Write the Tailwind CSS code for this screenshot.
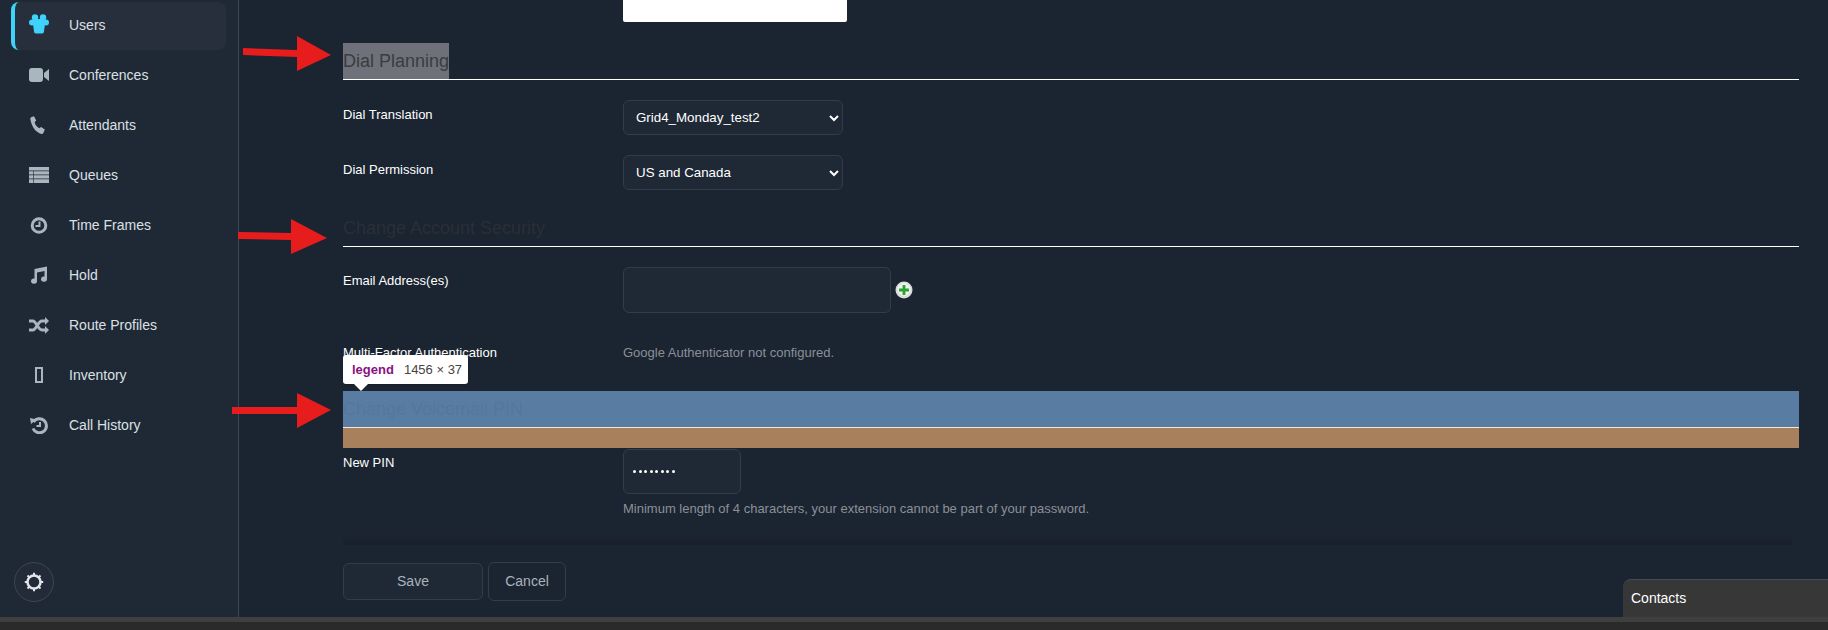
<!DOCTYPE html>
<html lang="en">
<head>
    <meta charset="UTF-8">
    <title>Users</title>
    <script src="https://cdn.jsdelivr.net/npm/@tailwindcss/browser@4"></script>
</head>
<body class="relative h-[630px] w-[1828px] overflow-hidden bg-[#2a2a2a] font-['Liberation_Sans',sans-serif]">

    <!-- app frame -->
    <div class="flex h-[617px] overflow-hidden rounded-bl-[4px] bg-[#1b2431]">

        <!-- sidebar -->
        <aside class="relative h-full w-[239px] shrink-0 border-r border-[#3c4654] bg-[#1f2935] pt-[2px] pl-[11px] pr-[12px]">
            <nav class="flex flex-col text-[14px] text-[#dbe0e5]">
                <a class="flex h-[48px] items-center rounded-lg border-l-[4px] border-[#3fd2fb] bg-[#272e3c] pb-[2px] pl-[14px]">
                    <svg class="mr-[20px] h-[22px] w-[20px] shrink-0 text-[#3fd2fb]" viewBox="0 0 20 22" fill="currentColor"><circle cx="6" cy="3.500" r="3.200"/><circle cx="14" cy="3.500" r="3.200"/><circle cx="3" cy="8.500" r="3"/><circle cx="17" cy="8.500" r="3"/><path d="M5 5h10l1 5-1 7.500a2 2 0 0 1-2 2H7a2 2 0 0 1-2-2L4 10z"/></svg>
                    Users
                </a>
                <a class="mt-[1px] flex h-[48px] items-center pl-[18px]">
                    <svg class="mr-[20px] h-[16px] w-[20px] shrink-0 text-[#a9b6bf]" viewBox="0 0 20 16" fill="currentColor"><rect x="0" y="1" width="14" height="14" rx="3"/><path d="M15 6l5-4v12l-5-4z"/></svg>
                    Conferences
                </a>
                <a class="mt-[2px] flex h-[48px] items-center pl-[18px]">
                    <svg class="mr-[20px] h-[18px] w-[20px] shrink-0 text-[#a9b6bf]" viewBox="0 0 20 18" fill="currentColor"><path d="M2 1.200l3-.9 2.200 4.200-1.600 1.700c.6 2.600 2.200 4.600 4.600 6l1.900-1.300 3.700 2.700-1.400 3.300c-.4.800-1.200 1.200-2 1C6.800 16.200 2.800 11.200 1.400 3.400 1.300 2.500 1.400 1.700 2 1.200z"/></svg>
                    Attendants
                </a>
                <a class="mt-[2px] flex h-[48px] items-center pl-[18px]">
                    <svg class="mr-[20px] h-[16px] w-[20px] shrink-0 text-[#a9b6bf]" viewBox="0 0 20 16" fill="currentColor"><path d="M0 0h20v3.600H0zM0 4.200h4v3.400H0zM4.600 4.200H20v3.400H4.600zM0 8.200h4v3.400H0zM4.600 8.200H20v3.400H4.600zM0 12.200h4V16H0zM4.600 12.200H20V16H4.600z"/></svg>
                    Queues
                </a>
                <a class="mt-[2px] flex h-[48px] items-center pl-[18px]">
                    <svg class="mr-[20px] h-[17px] w-[20px] shrink-0 text-[#a9b6bf]" viewBox="0 0 20 17" fill="none" stroke="currentColor"><circle cx="10" cy="8.500" r="6.800" stroke-width="3"/><path d="M10.500 4.500v4.500H6.500" stroke-width="2"/></svg>
                    Time Frames
                </a>
                <a class="mt-[2px] flex h-[48px] items-center pl-[18px]">
                    <svg class="mr-[20px] h-[18px] w-[20px] shrink-0 text-[#a9b6bf]" viewBox="0 0 20 18" fill="currentColor"><path d="M18 .5V13a3 2.600 0 1 1-2.500-2.500V5L8 6.500V15a3 2.600 0 1 1-2.500-2.500V3z"/></svg>
                    Hold
                </a>
                <a class="mt-[2px] flex h-[48px] items-center pl-[18px]">
                    <svg class="mr-[20px] h-[17px] w-[20px] shrink-0 text-[#a9b6bf]" viewBox="0 0 20 17" fill="none" stroke="currentColor" stroke-width="3"><path d="M0 4h4c3 0 5 9 9 9h3M0 13h4c3 0 5-9 9-9h3"/><path d="M16 0l4 4-4 4zM16 9l4 4-4 4z" fill="currentColor" stroke="none"/></svg>
                    Route Profiles
                </a>
                <a class="mt-[2px] flex h-[48px] items-center pl-[18px]">
                    <span class="mr-[20px] flex w-[20px] shrink-0 justify-center"><span class="h-[16px] w-[8px] border-2 border-[#a9b6bf]"></span></span>
                    Inventory
                </a>
                <a class="mt-[2px] flex h-[48px] items-center pl-[18px]">
                    <svg class="mr-[20px] h-[17px] w-[20px] shrink-0 text-[#a9b6bf]" viewBox="0 0 20 17" fill="none" stroke="currentColor"><path d="M4.500 5a7 7 0 1 1-.5 6.500" stroke-width="3"/><path d="M1 1l6.500 1.500L2 7z" fill="currentColor" stroke="none"/><path d="M11 5v4H7.500" stroke-width="2"/></svg>
                    Call History
                </a>
            </nav>
            <button class="absolute bottom-[15px] left-[14px] flex h-[40px] w-[40px] items-center justify-center rounded-full border border-[#3c4654] bg-[#232b39]">
                <svg class="h-[20px] w-[20px] text-[#e2e6ea]" viewBox="0 0 20 20" fill="none" stroke="currentColor"><circle cx="10" cy="10" r="6.500" stroke-width="2.500"/><path d="M10 .8v3M10 16.200v3M.8 10h3M16.200 10h3M3.500 3.500l2.100 2.100M14.400 14.400l2.100 2.100M3.500 16.500l2.100-2.100M14.400 5.600l2.100-2.100" stroke-width="2"/></svg>
            </button>
        </aside>

        <!-- form -->
        <main class="w-[1456px] ml-[104px] text-[13px] text-white">
            <div class="ml-[280px] h-[22px] w-[224px] rounded-b-[2px] bg-white"></div>

            <div class="mt-[21px] h-[37px] border-b border-white">
                <span class="inline-block h-[36px] bg-[#6e7179] px-0 text-[18px] leading-[36px] text-[#3a3c42]">Dial Planning</span>
            </div>

            <div class="mt-[20px] flex h-[35px]">
                <label class="w-[280px] pt-[7px] leading-[16px]">Dial Translation</label>
                <div class="flex h-[35px] w-[220px] items-center justify-between rounded-md border border-[#333c4a] bg-[#1f2835] pl-[12px] pr-[3px] text-[13.333px]">
                    <span>Grid4_Monday_test2</span>
                    <svg class="h-[10px] w-[10px]" viewBox="0 0 10 10" fill="none" stroke="currentColor" stroke-width="2"><path d="M1 3l4 4 4-4"/></svg>
                </div>
            </div>
            <div class="mt-[20px] flex h-[35px]">
                <label class="w-[280px] pt-[7px] leading-[16px]">Dial Permission</label>
                <div class="flex h-[35px] w-[220px] items-center justify-between rounded-md border border-[#333c4a] bg-[#1f2835] pl-[12px] pr-[3px] pt-[1px] text-[13.333px]">
                    <span>US and Canada</span>
                    <svg class="h-[10px] w-[10px]" viewBox="0 0 10 10" fill="none" stroke="currentColor" stroke-width="2"><path d="M1 3l4 4 4-4"/></svg>
                </div>
            </div>

            <div class="mt-[20px] h-[37px] border-b border-white text-[18px] leading-[36px] text-[#2a2f37]">Change Account Security</div>

            <div class="mt-[20px] flex h-[46px]">
                <label class="w-[280px] pt-[6px] leading-[16px]">Email Address(es)</label>
                <div class="h-[46px] w-[268px] rounded-md border border-[#333c4a] bg-[#1f2835]"></div>
                <svg class="mt-[14px] ml-[4px] h-[18px] w-[18px]" viewBox="0 0 18 18"><circle cx="9" cy="9" r="8.500" fill="#d9dcd9"/><circle cx="9" cy="8.500" r="6.500" fill="#f0f2f0"/><path d="M9 4v10M4 9h10" stroke="#27a52d" stroke-width="2.800"/></svg>
            </div>

            <div class="mt-[32px] flex h-[16px] leading-[16px]">
                <label class="w-[280px]">Multi-Factor Authentication</label>
                <span class="text-[#8b9097]">Google Authenticator not configured.</span>
            </div>

            <!-- devtools highlight on the legend -->
            <div class="relative mt-[30px]">
                <div class="absolute -top-[36px] left-0 flex h-[29px] w-[125px] items-center whitespace-nowrap rounded-[3px] bg-white pl-[9px] shadow">
                    <span class="font-bold text-[#881280]">legend</span>
                    <span class="ml-[10px] text-[#444]">1456 × 37</span>
                    <span class="absolute top-[28px] left-[10px] h-0 w-0 border-x-[8px] border-t-[8px] border-x-transparent border-t-white"></span>
                </div>
                <div class="h-[36px] bg-[#597da2] text-[18px] leading-[36px] text-[#55779a]">Change Voicemail PIN</div>
                <div class="h-[1px] bg-[#f2ead8]"></div>
                <div class="h-[20px] bg-[#a8805c]"></div>
            </div>

            <div class="mt-px flex h-[45px]">
                <label class="w-[280px] pt-[6px] leading-[16px]">New PIN</label>
                <div class="flex h-[45px] w-[118px] items-center gap-[2.500px] rounded-md border border-[#333c4a] bg-[#1f2835] pl-[9px]">
                    <i class="h-[3px] w-[3px] rounded-full bg-white"></i><i class="h-[3px] w-[3px] rounded-full bg-white"></i><i class="h-[3px] w-[3px] rounded-full bg-white"></i><i class="h-[3px] w-[3px] rounded-full bg-white"></i><i class="h-[3px] w-[3px] rounded-full bg-white"></i><i class="h-[3px] w-[3px] rounded-full bg-white"></i><i class="h-[3px] w-[3px] rounded-full bg-white"></i><i class="h-[3px] w-[3px] rounded-full bg-white"></i>
                </div>
            </div>
            <p class="mt-[7px] ml-[280px] leading-[16px] text-[#8b9097]">Minimum length of 4 characters, your extension cannot be part of your password.</p>

            <div class="mt-[20px] h-[8px] w-[1449px] bg-linear-to-t from-[#181f2b] to-transparent"></div>
            <div class="flex h-[70px] items-start gap-[5px] pt-[17px] text-[14px] text-[#a9b3bc]">
                <button class="mt-px h-[37px] w-[140px] rounded-md border border-[#333c4a] bg-[#1f2835]">Save</button>
                <button class="h-[39px] w-[78px] rounded-md border border-[#333c4a]">Cancel</button>
            </div>
        </main>
    </div>
    <div class="h-[5px] bg-[#3f3f3f]"></div>

    <!-- contacts dock -->
    <div class="absolute top-[579px] left-[1623px] flex h-[38px] w-[205px] items-center rounded-tl-lg border-t border-[#444c5a] bg-[#373737] pl-[8px] text-[14px] text-white">Contacts</div>

    <!-- red annotation arrows -->
    <svg class="absolute top-0 left-0" width="1828" height="630" fill="#e71c1c">
        <path d="M243 48L297 50V36L331 55L297 71V57L243 55Z"/>
        <path d="M238 232L291 233V219L327 238L291 254V240L238 239Z"/>
        <path d="M232 407H297V393L331 410L297 428V414H232Z"/>
    </svg>
</body>
</html>
